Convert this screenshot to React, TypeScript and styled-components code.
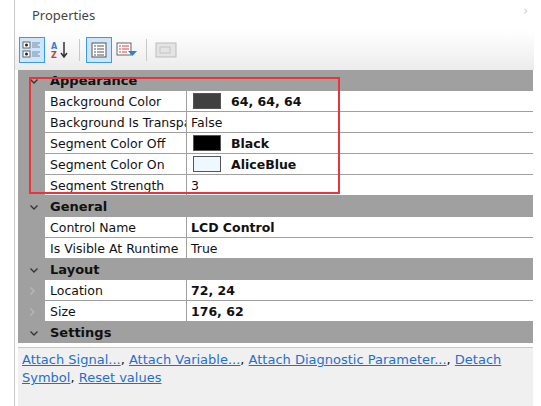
import React from "react";
import styled, { createGlobalStyle } from "styled-components";

const Global = createGlobalStyle`
  html, body { margin: 0; padding: 0; background: #fff; }
  body { font-family: Tahoma, "DejaVu Sans", "Liberation Sans", sans-serif; }
`;

const Page = styled.div`
  width: 541px; height: 406px; display: flex; overflow: hidden;
`;
const Gap = styled.div`width: 14px; flex: none;`;
const Panel = styled.div`
  flex: none; width: 519px; border-left: 1px solid #c8c8c8; display: flex; flex-direction: column;
  position: relative;
`;
const Title = styled.div`
  height: 30px; padding-left: 17px; display: flex; align-items: center;
  font-family: "Noto Sans", "Open Sans", sans-serif; font-size: 13px; color: #444;
`;
const Close = styled.span`
  position: absolute; right: 6px; top: 4px; color: #ccc; font-size: 12px;
`;
const Toolbar = styled.div`
  height: 40px; display: flex; align-items: center; padding-left: 4px; gap: 2px;
  background: linear-gradient(#ffffff, #ececec);
`;
const Btn = styled.div<{ $on?: boolean }>`
  width: 24px; height: 24px; display: flex; align-items: center; justify-content: center;
  border: 1px solid ${p => (p.$on ? "#3c9be8" : "transparent")};
  background: ${p => (p.$on ? "#cde6fb" : "transparent")};
`;
const Sep = styled.div`width: 1px; height: 22px; background: #c8c8c8; margin: 0 4px;`;
const Grid = styled.div`
  margin-left: 3px; width: 515px; background: #a0a0a0; display: flex; flex-direction: column;
  position: relative; height: 273px; flex: none; overflow: hidden; font-family: Tahoma, "DejaVu Sans", sans-serif;
  font-size: 12.5px;
`;
const Header = styled.div`
  height: 21px; flex: none; display: flex; align-items: center; font-weight: bold; color: #111;
  font-size: 13px;
`;
const Chev = styled.div`width: 32px; display: flex; justify-content: center; color: #333;`;
const Row = styled.div`
  height: 21px; flex: none; display: flex;
`;
const Gutter = styled.div`width: 27px; display: flex; align-items: center; justify-content: center; color: #bbb;`;
const Name = styled.div`
  background: #fff; border-right: 1px solid #a0a0a0; border-bottom: 1px solid #a0a0a0;
  display: flex; align-items: center; padding-left: 5px; white-space: nowrap; overflow: hidden; color: #111;
  box-sizing: border-box; width: 142px;
`;
const Value = styled.div<{ $bold?: boolean }>`
  flex: 1; background: #fff; border-bottom: 1px solid #a0a0a0; display: flex; align-items: center;
  padding-left: 4px; gap: 10px; font-weight: ${p => (p.$bold ? "bold" : "normal")}; color: #111;
`;
const Swatch = styled.div<{ $c: string }>`
  width: 26px; height: 14px; background: ${p => p.$c}; border: 1px solid #555; margin-left: 2px;
`;
const RedBox = styled.div`
  position: absolute; left: 11px; top: 7px; width: 311px; height: 117px; border: 2px solid #e8353b;
  box-sizing: border-box; pointer-events: none;
`;
const Footer = styled.div`
  margin-left: 3px; margin-top: 4px; width: 515px; flex: 1; background: #f0f0f0; border-top: 1px solid #c8c8c8;
  padding: 3px 4px; box-sizing: border-box; font-family: Tahoma, "DejaVu Sans", sans-serif; font-size: 13px;
  line-height: 18px; color: #111;
`;
const Link = styled.a`color: #1f6fd0; text-decoration: underline; cursor: pointer;`;

const Chevron = ({ open }: { open?: boolean }) => (
  <svg width="10" height="10" viewBox="0 0 10 10">
    {open ? <path d="M1.5 3.5 L5 7 L8.5 3.5" stroke="#333" strokeWidth="1.3" fill="none" /> :
      <path d="M3.5 1.5 L7 5 L3.5 8.5" stroke="#b8b8b8" strokeWidth="1.3" fill="none" />}
  </svg>
);

type R = { n: string; v: string; bold?: boolean; sw?: string; closed?: boolean };
const sections: { t: string; rows: R[] }[] = [
  { t: "Appearance", rows: [
    { n: "Background Color", v: "64, 64, 64", bold: true, sw: "#404040" },
    { n: "Background Is Transparent", v: "False" },
    { n: "Segment Color Off", v: "Black", bold: true, sw: "#000" },
    { n: "Segment Color On", v: "AliceBlue", bold: true, sw: "#f0f8ff" },
    { n: "Segment Strength", v: "3" },
  ]},
  { t: "General", rows: [
    { n: "Control Name", v: "LCD Control", bold: true },
    { n: "Is Visible At Runtime", v: "True" },
  ]},
  { t: "Layout", rows: [
    { n: "Location", v: "72, 24", bold: true, closed: true },
    { n: "Size", v: "176, 62", bold: true, closed: true },
  ]},
  { t: "Settings", rows: [] },
];

export default function App() {
  return (
    <Page>
      <Global />
      <Gap />
      <Panel>
        <Title>Properties</Title>
        <Close>›</Close>
        <Toolbar>
          <Btn $on>
            <svg width="20" height="20" viewBox="0 0 20 20">
              <rect x="1" y="2" width="7" height="6" fill="#fff" stroke="#666" />
              <circle cx="4.5" cy="5" r="1.5" fill="#222" />
              <rect x="1" y="11" width="7" height="6" fill="#fff" stroke="#666" />
              <circle cx="4.5" cy="14" r="1.5" fill="#222" />
              <path d="M10 3h8M10 5h6M10 7h8M10 12h8M10 14h6M10 16h8" stroke="#7a8ca8" />
            </svg>
          </Btn>
          <Btn>
            <svg width="20" height="20" viewBox="0 0 20 20">
              <text x="1" y="9" fontSize="8" fontWeight="bold" fill="#3c7fd0" fontFamily="DejaVu Sans">A</text>
              <text x="1" y="18" fontSize="8" fontWeight="bold" fill="#c04040" fontFamily="DejaVu Sans">Z</text>
              <path d="M14 2v14M11 13l3 4 3-4" stroke="#333" strokeWidth="1.5" fill="none" />
            </svg>
          </Btn>
          <Sep />
          <Btn $on>
            <svg width="18" height="18" viewBox="0 0 18 18">
              <rect x="2" y="2" width="14" height="14" fill="#fff" stroke="#555" />
              <path d="M4 5h2M4 8h2M4 11h2M4 14h2M7 5h7M7 8h7M7 11h7M7 14h7" stroke="#555" />
            </svg>
          </Btn>
          <Btn>
            <svg width="22" height="18" viewBox="0 0 22 18">
              <rect x="1" y="2" width="14" height="12" fill="#fff" stroke="#666" />
              <path d="M3 5h2M3 8h2M3 11h2M6 5h7M6 8h7M6 11h5" stroke="#d04040" />
              <path d="M12 10h9l-4.5 5z" fill="#2a7fd8" />
            </svg>
          </Btn>
          <Sep />
          <Btn>
            <svg width="22" height="18" viewBox="0 0 22 18">
              <rect x="1" y="2" width="20" height="14" fill="#e4e4e4" stroke="#bbb" />
              <rect x="5" y="6" width="10" height="6" fill="none" stroke="#c4c4c4" />
            </svg>
          </Btn>
        </Toolbar>
        <Grid>
          {sections.map(s => (
            <React.Fragment key={s.t}>
              <Header><Chev><Chevron open /></Chev>{s.t}</Header>
              {s.rows.map(r => (
                <Row key={r.n}>
                  <Gutter>{r.closed && <Chevron />}</Gutter>
                  <Name>{r.n}</Name>
                  <Value $bold={r.bold}>{r.sw && <Swatch $c={r.sw} />}{r.v}</Value>
                </Row>
              ))}
            </React.Fragment>
          ))}
          <RedBox />
        </Grid>
        <Footer>
          <Link>Attach Signal...</Link>, <Link>Attach Variable...</Link>, <Link>Attach Diagnostic Parameter...</Link>, <Link>Detach Symbol</Link>, <Link>Reset values</Link>
        </Footer>
      </Panel>
    </Page>
  );
}
